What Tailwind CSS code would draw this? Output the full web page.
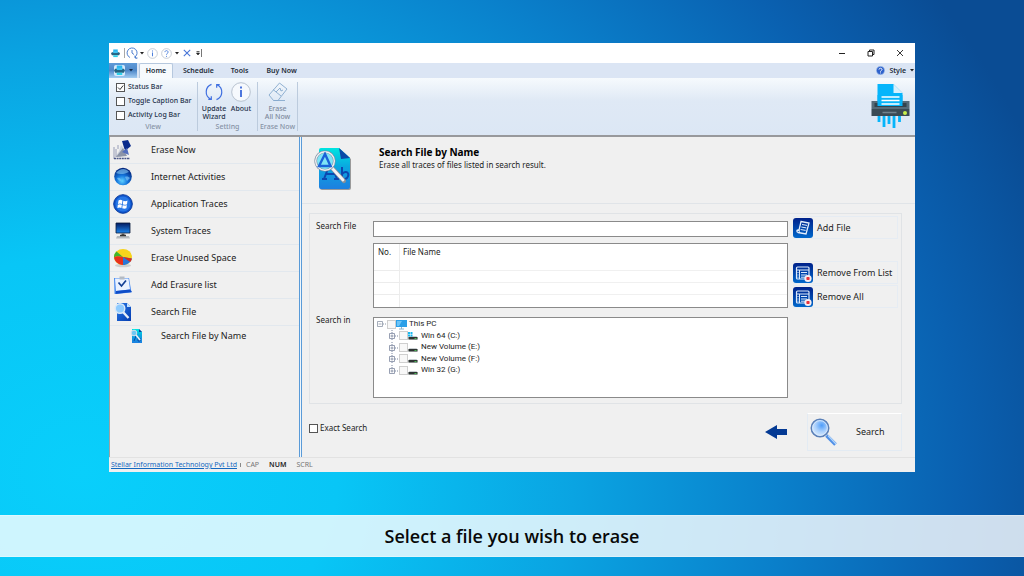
<!DOCTYPE html>
<html lang="en">
<head>
<meta charset="utf-8">
<meta name="viewport" content="width=device-width, initial-scale=1">
<title>Search File by Name</title>
<script src="https://cdn.jsdelivr.net/npm/@tailwindcss/browser@4"></script>
</head>
<body class="flex min-h-screen flex-col bg-[radial-gradient(ellipse_100%_150%_at_8%_82%,#09cffb_0%,#08c6f6_25%,#0aa4e2_48%,#0a80cb_68%,#0a60b0_86%,#0a4c94_100%)] font-['Noto_Sans',sans-serif] text-[#1c1c1c]">

<svg class="absolute size-0" aria-hidden="true">
  <defs>
    <linearGradient id="g-blue" x1="0" y1="0" x2="0" y2="1"><stop offset="0" stop-color="#00218a"/><stop offset="1" stop-color="#0068cc"/></linearGradient>
    <linearGradient id="g-page" x1="0" y1="0" x2="0" y2="1"><stop offset="0" stop-color="#00e5e0"/><stop offset=".45" stop-color="#0aa8e0"/><stop offset="1" stop-color="#1d7fe0"/></linearGradient>
    <linearGradient id="g-doc" x1="0" y1="0" x2="1" y2="1"><stop offset="0" stop-color="#2a7be8"/><stop offset="1" stop-color="#043cb0"/></linearGradient>
    <radialGradient id="g-globe" cx=".45" cy=".75" r=".7"><stop offset="0" stop-color="#5fd0ff"/><stop offset=".45" stop-color="#1476dd"/><stop offset="1" stop-color="#03267e"/></radialGradient>
    <radialGradient id="g-lens" cx=".6" cy=".35" r=".7"><stop offset="0" stop-color="#4f9dfa"/><stop offset=".5" stop-color="#a9cffc"/><stop offset="1" stop-color="#e4f1ff"/></radialGradient>
    <linearGradient id="g-screen" x1="0" y1="0" x2="0" y2="1"><stop offset="0" stop-color="#021a60"/><stop offset="1" stop-color="#1c86ee"/></linearGradient>
  </defs>
  <symbol id="shredder" viewBox="0 0 38 46">
    <path d="M6 1h16l9 9v18H6z" fill="#06b5fb"/><path d="M22 1l9 9h-9z" fill="#d8f0fc"/>
    <path d="M0 18h38v8H0z" fill="#566b78"/><path d="M3 20h32v4H3z" fill="#33434d"/>
    <path d="M6 12h25v11H6z" fill="#06b5fb"/><path d="M10 14h18M10 17.500h18M10 21h18" stroke="#fff" stroke-width="1.500"/>
    <path d="M0 26h38v7H0z" fill="#3b4b55"/><path d="M11 29.500h14" stroke="#71828c" stroke-width="1.500"/>
    <circle cx="33.500" cy="30" r="2" fill="#c8f04a"/>
    <path d="M7.500 33v6M12.500 33v11M17.500 33v8M22.500 33v12M28 33v6" stroke="#06b5fb" stroke-width="2.800"/>
  </symbol>
  <symbol id="mini-shredder" viewBox="0 0 10 10"><path d="M2.500 .5h5v4h-5z" fill="#29b6ee"/><path d="M1 3.500h8l1 1.500-1 2H1L0 5z" fill="#256482"/><path d="M2.500 2.500h5v2h-5z" fill="#3fc3f4"/><path d="M2.500 7h5v2h-5z" fill="#2ad1ea"/></symbol>
  <symbol id="list-remove" viewBox="0 0 20 20">
    <rect width="20" height="20" rx="3" fill="url(#g-blue)"/>
    <rect x="3.500" y="4" width="12.500" height="12" rx="1" fill="none" stroke="#dce9fb" stroke-width="1.200"/>
    <path d="M3.500 7h12.500M6.500 7v9M8 9.500h6M8 12h6M8 14.200h4M4.500 9.500h1M4.500 12h1M4.500 14.200h1" stroke="#dce9fb" stroke-width="1"/>
    <circle cx="15" cy="15.500" r="3.600" fill="#f6eef2"/><rect x="13.400" y="13.900" width="3.200" height="3.200" rx=".8" fill="#e8343c"/>
  </symbol>
  <symbol id="drive" viewBox="0 0 10 9"><path d="M1.500 5h7l1 1.500v2h-9v-2z" fill="#c9cfd2"/><path d="M.5 6h9v2.500h-9z" fill="#2e3433"/><path d="M6.500 7.500h2" stroke="#4ccc58" stroke-width=".9"/></symbol>
  <symbol id="file-search" viewBox="0 0 18 20"><path d="M3 1h10l4 4v14H3z" fill="url(#g-doc)"/><path d="M13 1l4 4h-4z" fill="#bfe0ff"/><path d="M9 10l5.500 6" stroke="#e9eff8" stroke-width="2.400"/><circle cx="6" cy="6.500" r="4.800" fill="#8ecbff" stroke="#dbe9f8" stroke-width="1.400"/></symbol>
</svg>

<main class="mx-[109px] mt-[43px] flex flex-col bg-[#f0f0f0] text-[9px] leading-3">

  <header class="flex h-5 items-center justify-between bg-white pl-[2px]">
    <div class="flex items-center">
      <svg class="size-[9px]"><use href="#mini-shredder"/></svg>
      <span class="ml-1 h-[10px] w-px bg-[#a8a8a8]"></span>
      <button class="ml-px flex items-center gap-[2px]" aria-label="History">
        <svg class="size-3" viewBox="0 0 12 12" fill="none" stroke="#4f7fd0"><path d="M4 10.500A5 5 0 1 1 9 10l1.500 1.500M9 8.500V11h2.500M6 3v3l2 1.500"/></svg>
        <svg class="h-[3px] w-1" viewBox="0 0 4 3"><path d="M0 0h4L2 2.600z" fill="#222"/></svg>
      </button>
      <button class="ml-[3px]" aria-label="Information"><svg class="block size-[11px]" viewBox="0 0 12 12" fill="none"><circle cx="6" cy="6" r="5.300" stroke="#b4bcc8" stroke-width=".8"/><path d="M6 5v4M6 2.700v1.200" stroke="#4c7fdc" stroke-width="1.100"/></svg></button>
      <button class="ml-[3px] flex items-center gap-[3px]" aria-label="Help">
        <svg class="size-[11px]" viewBox="0 0 12 12" fill="none"><circle cx="6" cy="6" r="5.300" stroke="#b4bcc8" stroke-width=".8"/><path d="M4.300 4.500c0-2.200 3.400-2.200 3.400 0C7.700 6 6 5.800 6 7.400M6 8.600v1.100" stroke="#4c7fdc"/></svg>
        <svg class="h-[3px] w-1" viewBox="0 0 4 3"><path d="M0 0h4L2 2.600z" fill="#222"/></svg>
      </button>
      <button class="ml-1" aria-label="Stop"><svg class="block size-2" viewBox="0 0 8 8"><path d="M.8.8l6.400 6.400M7.200.8L.8 7.200" stroke="#4775d8" stroke-width="1.100"/></svg></button>
      <button class="ml-[5px]" aria-label="Customize toolbar"><svg class="block h-[5px] w-1" viewBox="0 0 4 5"><path d="M.5 .5h3M.5 2h3L2 4z" fill="#222" stroke="#222" stroke-width=".7"/></svg></button>
      <span class="ml-px h-2 w-px bg-[#777]"></span>
    </div>
    <div class="mr-[11px] flex items-center gap-[21px] text-[#222]">
      <button aria-label="Minimize"><svg class="block size-2" viewBox="0 0 8 8"><path d="M1 4.500h6" stroke="currentColor"/></svg></button>
      <button aria-label="Restore"><svg class="block size-2" viewBox="0 0 8 8" fill="none" stroke="currentColor"><path d="M1 2.500h4.500V7H1zM2.500 2.500V1H7v4.500H5.500"/></svg></button>
      <button aria-label="Close"><svg class="block size-2" viewBox="0 0 8 8"><path d="M1 1l6 6M7 1L1 7" stroke="currentColor" stroke-width=".9"/></svg></button>
    </div>
  </header>

  <nav class="flex h-[15px] bg-[#dbe5f4] text-[7px] font-semibold leading-[15px] text-[#222b38]">
    <button class="flex w-7 items-center justify-center gap-1 bg-linear-to-b from-[#5f9ad8] via-[#4f88c8] to-[#a4cdf2]" aria-label="Application menu">
      <svg class="size-[11px] rounded-[2px] bg-[#d6e9fb]"><use href="#mini-shredder"/></svg>
      <svg class="h-[3px] w-1" viewBox="0 0 4 3"><path d="M0 0h4L2 2.600z" fill="#13294a"/></svg>
    </button>
    <button class="ml-[2px] w-[34px] rounded-t-[2px] border-x border-t border-[#b6c8de] bg-[#f7fafd] leading-[14px]">Home</button>
    <button class="ml-[10px]">Schedule</button>
    <button class="ml-[17px]">Tools</button>
    <button class="ml-[18px]">Buy Now</button>
    <button class="ml-auto mr-px flex items-center gap-1">
      <svg class="size-[9px]" viewBox="0 0 10 10"><circle cx="5" cy="5" r="4.600" fill="#2f62cc" stroke="#a9c5ec" stroke-width=".8"/><path d="M3.300 4c0-2 3.400-2 3.400 0C6.700 5 5 5 5 6.300M5 7.200v1" fill="none" stroke="#fff"/></svg>
      Style
      <svg class="h-[3px] w-1" viewBox="0 0 4 3"><path d="M0 0h4L2 2.600z" fill="#222"/></svg>
    </button>
  </nav>

  <section class="flex h-[59px] border-b-2 border-[#98999c] bg-linear-to-b from-[#f6fafd] via-[#dfe9f5] via-40% to-[#dce7f5] text-[7px] font-medium leading-[8px] text-[#25324a]" aria-label="Ribbon">
    <div class="my-1 flex w-[89px] flex-col border-r border-[#bccbdd] pl-[7px]">
      <label class="-mt-[2px] flex h-[14px] items-center gap-[3px]"><span class="relative size-[9px]"><input type="checkbox" checked class="block size-[9px] appearance-none border border-[#555] bg-white"><svg class="pointer-events-none absolute inset-0" viewBox="0 0 9 9"><path d="M2 4.500l2 2L7.200 2.500" fill="none" stroke="#333"/></svg></span>Status Bar</label>
      <label class="flex h-[14px] items-center gap-[3px]"><input type="checkbox" class="size-[9px] appearance-none border border-[#555] bg-white">Toggle Caption Bar</label>
      <label class="flex h-[14px] items-center gap-[3px]"><input type="checkbox" class="size-[9px] appearance-none border border-[#555] bg-white">Activity Log Bar</label>
      <span class="mt-auto pr-[7px] text-center text-[#8793a5]">View</span>
    </div>
    <div class="my-1 flex w-[60px] flex-col border-r border-[#bccbdd]">
      <div class="flex gap-px pl-[3px]">
        <button class="flex w-[26px] flex-col items-center">
          <svg class="size-5" viewBox="0 0 20 20" fill="none" stroke="#3f6fe0" stroke-width="1.200"><path d="M7.500 2.400A8 8 0 0 0 6.500 17M4.300 17.300h3v-3M12.500 17.600A8 8 0 0 0 13.500 3M15.700 2.700h-3v3"/></svg>
          <span class="mt-[3px]">Update<br>Wizard</span>
        </button>
        <button class="flex w-[26px] flex-col items-center">
          <svg class="size-5" viewBox="0 0 20 20"><circle cx="10" cy="10" r="9.300" fill="#f6f9fd" stroke="#aab5c4" stroke-width=".8"/><path d="M10 8v7M10 4.500v2" stroke="#2f60d8" stroke-width="1.700"/></svg>
          <span class="mt-[3px]">About</span>
        </button>
      </div>
      <span class="mt-auto text-center text-[#8793a5]">Setting</span>
    </div>
    <div class="my-1 flex w-10 flex-col border-r border-[#bccbdd] text-[#7f8b9d]">
      <button class="flex flex-col items-center" disabled>
        <svg class="size-5" viewBox="0 0 20 20" fill="none" stroke="#86a9cd" stroke-width=".9"><path d="M11.500 1L19 7l-9 11.500H5.500L1 13zM5 7.500l8 6.500M8 10l4-4 1 3 2-1M5.500 18.500H17"/></svg>
        <span class="mt-[3px]">Erase<br>All Now</span>
      </button>
      <span class="mt-auto whitespace-nowrap text-center text-[#8793a5]">Erase Now</span>
    </div>
    <svg class="ml-auto mr-[5px] mt-[5px] h-[46px] w-[39px]"><use href="#shredder"/></svg>
  </section>

  <div class="flex h-80">
    <nav class="flex w-[190px] shrink-0 flex-col border-l border-[#a0a0a0] text-[9px]">
      <a href="#" class="flex h-[27px] items-center gap-[18px] border-b border-[#e2e8ee] pl-[3px]">
        <svg class="size-5" viewBox="0 0 20 20"><path d="M9 1l6-1 3 6-6 5z" fill="#0a2b8c"/><path d="M8 5l5 6-5 6-5-1 3-5z" fill="#cfd4df"/><path d="M3 17l7-9 4 8z" fill="#8c94a8"/><path d="M1 7v12M3 9v8M5 5v4" stroke="#8089a8" stroke-width=".8"/><path d="M1 18.500h16" stroke="#4b5788" stroke-width="1.600" stroke-dasharray="2 .6"/><path d="M9 12l5-4 2 7" fill="#536ebd"/></svg>Erase Now</a>
      <a href="#" class="flex h-[27px] items-center gap-[18px] border-b border-[#e2e8ee] pl-[3px]">
        <svg class="size-5" viewBox="0 0 20 20"><circle cx="10" cy="9.500" r="8.800" fill="url(#g-globe)"/><path d="M3 6c4-5 10-5 13-1-4 2-9 3-13 1zM4 11c3-1 4 1 4 3-2 0-3-1-4-3zM12 10c2-1 4 0 5 1l-3 3z" fill="#8bcdf8" opacity=".6"/></svg>Internet Activities</a>
      <a href="#" class="flex h-[27px] items-center gap-[18px] border-b border-[#e2e8ee] pl-[3px]">
        <svg class="size-5" viewBox="0 0 20 20"><circle cx="10" cy="10" r="9.300" fill="#0f56cf" stroke="#093a9c"/><circle cx="10" cy="10" r="7.500" fill="#2777e6"/><path d="M5.500 6.500c1.500-.9 2.500-.8 4 0L9 10c-1.500-.7-2.500-.7-4 0zM10.300 6.800c1.500.7 2.700.6 4.200-.2L14 10.200c-1.400.8-2.700.7-4.200 0zM4.800 10.800c1.500-.8 2.600-.7 4.100 0L8.400 14c-1.400-.8-2.500-.7-4 0zM9.700 11c1.500.7 2.700.7 4.200 0l-.5 3.300c-1.400.7-2.700.6-4.200 0z" fill="#fff"/></svg>Application Traces</a>
      <a href="#" class="flex h-[27px] items-center gap-[18px] border-b border-[#e2e8ee] pl-[3px]">
        <svg class="size-5" viewBox="0 0 20 20"><path d="M3 2h14v10H3z" fill="url(#g-screen)" stroke="#0b1c3c" stroke-width=".8"/><path d="M8.500 12.500h3V15h-3z" fill="#555"/><path d="M4 15h12l1 2.500H3z" fill="#b4b9bd"/><path d="M7 14.500h6" stroke="#333" stroke-width="1.500"/></svg>System Traces</a>
      <a href="#" class="flex h-[27px] items-center gap-[18px] border-b border-[#e2e8ee] pl-[3px]">
        <svg class="size-5" viewBox="0 0 20 20"><ellipse cx="10" cy="17.500" rx="8" ry="1.800" fill="#cfcfcf"/><ellipse cx="10" cy="9" rx="9" ry="8" fill="#f6d31c"/><path d="M10 9L3.500 3.500A9 8 0 0 0 1 9.500c2-1.500 5-1.500 9-.5z" fill="#3fb52c"/><path d="M10 9c-4-1-7-1-9 .5C1.500 13 5 17 10 17z" fill="#e8301c"/><path d="M10 9v8c4 0 8-2.500 8.800-6.500z" fill="#2777d8"/><path d="M10 9l8.800 1.500c-.2 1.500-.8 2.500-1.600 3.500z" fill="#d82a20"/></svg>Erase Unused Space</a>
      <a href="#" class="flex h-[27px] items-center gap-[18px] border-b border-[#e2e8ee] pl-[3px]">
        <svg class="size-5" viewBox="0 0 20 20"><path d="M1 3h15l2.500 14.500L1.500 19z" fill="#4b8cf0"/><path d="M2 3.500h13.500l1.500 11L3 16z" fill="#eaf2ff"/><path d="M3 16l14-1.500 2 2.500-16.500 2z" fill="#0f4dc8"/><path d="M6.500 1.500h5v3h-5z" fill="#b4bbc4"/><path d="M5.500 7.500l3 3.500L13 5.500" fill="none" stroke="#123f94" stroke-width="1.700"/></svg>Add Erasure list</a>
      <a href="#" class="flex h-[27px] items-center gap-[18px] border-b border-[#e2e8ee] pl-[3px]">
        <svg class="size-5"><use href="#file-search"/></svg>Search File</a>
      <a href="#" class="flex h-[20px] items-center gap-[18px] pl-5">
        <svg class="h-[14px] w-[13px]" viewBox="0 0 13 14"><path d="M2 0h7l3 3v11H2z" fill="url(#g-page)"/><path d="M9 0l3 3H9z" fill="#0a3f9c"/><path d="M4 12l2-5M8 8v4h2V9" stroke="#0b48a8" fill="none"/><path d="M6 6l4 5" stroke="#eef2f8" stroke-width="1.500"/><circle cx="4" cy="4" r="2.800" fill="#6fc8f4" stroke="#d6e0ea"/></svg>Search File by Name</a>
    </nav>

    <div class="w-[3px] shrink-0 border-x border-[#5a9bd8] bg-[#eef6fc]"></div>

    <section class="flex min-w-0 flex-1 flex-col pl-[7px] pr-[13px]">
      <div class="-ml-[7px] -mr-[13px] flex h-[67px] items-start border-b border-[#e0e4e8] pl-3 pt-[9px]">
        <svg class="h-[44px] w-[38px]" viewBox="0 0 38 44"><path d="M6 3h20l11 10v29a2 2 0 0 1-2 2H8a2 2 0 0 1-2-2z" fill="#9a9a9a"/><path d="M5 4a2 2 0 0 1 2-2h18l11 10v29a2 2 0 0 1-2 2H7a2 2 0 0 1-2-2z" fill="url(#g-page)"/><path d="M25 2l11 10-9 1z" fill="#0b4aa8"/><path d="M10 33l6.500-17L23 33M12 28h9M8 33h5M20 33h5M28 21v12M28 28c5-5 8 0 5 4-2 2-5 1-5-1" fill="none" stroke="#0b48b0" stroke-width="2"/><path d="M19 23l11 12" stroke="#8a8f98" stroke-width="4.200" stroke-linecap="round"/><path d="M18 22l11 12" stroke="#f3f4f6" stroke-width="2.800" stroke-linecap="round"/><circle cx="11" cy="15" r="9.300" fill="#7fe4f6" stroke="#7d8ca0" stroke-width="2.600"/><circle cx="11" cy="15" r="9.300" fill="none" stroke="#eef1f4" stroke-width="1.400"/><path d="M5 20L11 8l5.500 12z" fill="none" stroke="#1b63d8" stroke-width="2.400"/></svg>
        <div class="ml-[27px]">
          <h1 class="text-[10px] font-bold leading-3 text-black">Search File by Name</h1>
          <p class="mt-px text-[8px] leading-3">Erase all traces of files listed in search result.</p>
        </div>
      </div>

      <div class="mt-[9px] grid grid-cols-[57px_minmax(0,1fr)_110px] grid-rows-[23px_65px_81px] gap-y-1 border border-[#e0e3e6] pb-[10px] pl-[6px] pr-[3px] pt-[2px] text-[8px]">
        <label for="search-file" class="pt-1">Search File</label>
        <div class="pt-[5px]"><input id="search-file" type="text" class="block h-4 w-full border border-[#8a8a8a] bg-white px-1 outline-none"></div>
        <button class="ml-[5px] flex h-[23px] items-center gap-1 border border-l-0 border-[#e6ecf3] text-left text-[9px]">
          <svg class="size-5 shrink-0" viewBox="0 0 20 20"><rect width="20" height="20" rx="3" fill="url(#g-blue)"/><path d="M8 3.500l8 1.500-3 11-8-1.500c-1.500-.5-1.500-2.500 0-2.500l1 .2z" fill="none" stroke="#e3eefc" stroke-width="1.300"/><path d="M9 6.500l5 .9M8.300 9l5 .9M7.600 11.500l5 .9M5 14.500c2 .3 1.500-2 1.500-2" fill="none" stroke="#e3eefc"/></svg>Add File</button>

        <span></span>
        <table class="h-[65px] w-full table-fixed border-separate border-spacing-0 border border-[#8a8a8a] bg-white text-left leading-[10px]">
          <thead><tr class="h-[15px]"><th class="w-[26px] border-r border-[#ececec] pl-1 font-normal">No.</th><th class="pl-[3px] font-normal">File Name</th></tr></thead>
          <tbody>
            <tr class="h-3"><td class="border-b border-r border-[#ececec]"></td><td class="border-b border-[#f0f0f0]"></td></tr>
            <tr class="h-3"><td class="border-b border-r border-[#ececec]"></td><td class="border-b border-[#f0f0f0]"></td></tr>
            <tr class="h-3"><td class="border-b border-r border-[#ececec]"></td><td class="border-b border-[#f0f0f0]"></td></tr>
            <tr class="h-3"><td class="border-r border-[#ececec]"></td><td></td></tr>
          </tbody>
        </table>
        <div class="ml-[5px] flex flex-col justify-end gap-px text-[9px]">
          <button class="flex h-[23px] items-center gap-1 whitespace-nowrap border border-l-0 border-[#e6ecf3] text-left"><svg class="size-5 shrink-0"><use href="#list-remove"/></svg>Remove From List</button>
          <button class="flex h-[23px] items-center gap-1 whitespace-nowrap border border-l-0 border-[#e6ecf3] text-left"><svg class="size-5 shrink-0"><use href="#list-remove"/></svg>Remove All</button>
        </div>

        <span class="pt-[2px]">Search in</span>
        <div class="mt-[5px] h-[81px] border border-[#8a8a8a] bg-white pl-[3px] font-['Roboto','Noto_Sans',sans-serif]">
          <label class="flex h-3 items-center"><svg class="h-3 w-[10px]" viewBox="0 0 10 12" fill="none" stroke="#8e98a8"><path d="M.5 3.500h5v5h-5zM1.500 6h3" stroke-width=".8"/><path d="M6 6h4" stroke-dasharray="1 1"/></svg><input type="checkbox" class="size-[9px] appearance-none border border-[#cfcfcf] bg-[#f8f8f8]"><svg class="h-[11px] w-3" viewBox="0 0 12 11"><path d="M0 1h11v7H0z" fill="#2b9fe8"/><path d="M1 2h5L3 7H1z" fill="#6cc4f7"/><path d="M3 10h5M5.500 8v2" stroke="#8ab4d0"/></svg><span class="ml-px">This PC</span></label>
          <div class="ml-3 flex flex-col">
            <label class="flex h-[11px] items-center"><svg class="h-[11px] w-[10px]" viewBox="0 0 10 11" fill="none" stroke="#7d88a0"><path d="M3 0v3M3 9v2M6 6h4" stroke-dasharray="1 1"/><path d="M.5 3.500h5v5h-5zM1.500 6h3M3 4.500v3" stroke-width=".8"/></svg><input type="checkbox" class="size-[9px] appearance-none border border-[#cfcfcf] bg-[#f8f8f8]"><svg class="h-[9px] w-[10px]"><use href="#drive"/><path d="M0 1h2v2H0zM2.500 1h2v2h-2zM0 3.500h2v2H0zM2.500 3.500h2v2h-2z" fill="#18b8f0"/></svg><span class="ml-[3px]">Win 64 (C:)</span></label>
            <label class="flex h-3 items-center"><svg class="h-[11px] w-[10px]" viewBox="0 0 10 11" fill="none" stroke="#7d88a0"><path d="M3 0v3M3 9v2M6 6h4" stroke-dasharray="1 1"/><path d="M.5 3.500h5v5h-5zM1.500 6h3M3 4.500v3" stroke-width=".8"/></svg><input type="checkbox" class="size-[9px] appearance-none border border-[#cfcfcf] bg-[#f8f8f8]"><svg class="h-[9px] w-[10px]"><use href="#drive"/></svg><span class="ml-[3px]">New Volume (E:)</span></label>
            <label class="flex h-[11px] items-center"><svg class="h-[11px] w-[10px]" viewBox="0 0 10 11" fill="none" stroke="#7d88a0"><path d="M3 0v3M3 9v2M6 6h4" stroke-dasharray="1 1"/><path d="M.5 3.500h5v5h-5zM1.500 6h3M3 4.500v3" stroke-width=".8"/></svg><input type="checkbox" class="size-[9px] appearance-none border border-[#cfcfcf] bg-[#f8f8f8]"><svg class="h-[9px] w-[10px]"><use href="#drive"/></svg><span class="ml-[3px]">New Volume (F:)</span></label>
            <label class="flex h-3 items-center"><svg class="h-[11px] w-[10px]" viewBox="0 0 10 11" fill="none" stroke="#7d88a0"><path d="M3 0v3M6 6h4" stroke-dasharray="1 1"/><path d="M.5 3.500h5v5h-5zM1.500 6h3M3 4.500v3" stroke-width=".8"/></svg><input type="checkbox" class="size-[9px] appearance-none border border-[#cfcfcf] bg-[#f8f8f8]"><svg class="h-[9px] w-[10px]"><use href="#drive"/></svg><span class="ml-[3px]">Win 32 (G:)</span></label>
          </div>
        </div>
      </div>

      <div class="mt-[9px] flex items-center">
        <label class="mb-2 flex items-center gap-[2px] text-[8px]"><input type="checkbox" class="size-[9px] appearance-none border border-[#555] bg-white">Exact Search</label>
        <button class="ml-auto" aria-label="Back"><svg class="block h-[14px] w-[22px]" viewBox="0 0 22 14"><path d="M0 7L12 0v4h10v6H12v4z" fill="#043a94"/></svg></button>
        <button class="ml-5 flex h-[38px] w-[95px] items-center border border-[#e3ebf3] border-t-white text-[9px]">
          <svg class="ml-[2px] size-[28px]" viewBox="0 0 28 28"><path d="M16.500 17.500l9 9" stroke="#4f8fe6" stroke-width="3.600"/><path d="M18 17.500l8 8.500" stroke="#b4d6fb" stroke-width="1.200"/><circle cx="10" cy="10" r="8.700" fill="url(#g-lens)" stroke="#5b80b8" stroke-width="1.600"/><circle cx="10" cy="10" r="7.400" fill="none" stroke="#dcebfc" stroke-width=".8"/></svg>
          <span class="ml-[18px]">Search</span>
        </button>
      </div>
    </section>
  </div>

  <footer class="flex h-[15px] items-center border-t border-[#e2e2e2] pl-[2px] text-[7px] text-[#777]">
    <a href="#" class="text-[#1468c0] underline">Stellar Information Technology Pvt Ltd</a>
    <span class="ml-[3px] h-1 w-px bg-[#888]"></span>
    <span class="ml-[5px]">CAP</span>
    <span class="ml-[10px] font-semibold text-[#222]">NUM</span>
    <span class="ml-[10px]">SCRL</span>
  </footer>
</main>

<p class="mb-[19px] mt-auto flex h-[42px] items-center justify-center border-y border-white/30 bg-white/80 font-['Open_Sans',sans-serif] text-[18px] font-semibold text-[#080808]">Select a file you wish to erase</p>

</body>
</html>
